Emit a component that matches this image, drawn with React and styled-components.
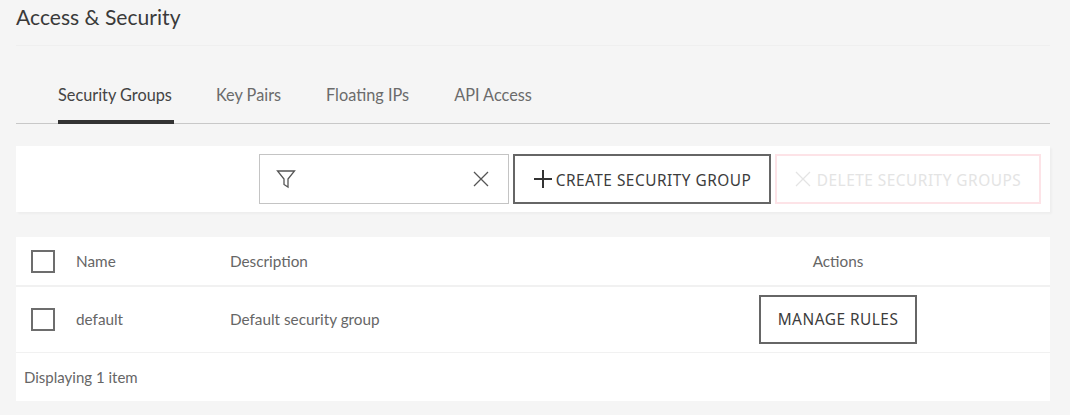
import styled, { createGlobalStyle } from "styled-components";

const GlobalStyle = createGlobalStyle`
  html, body {
    margin: 0;
    padding: 0;
    background: #f5f5f5;
    font-family: "Lato", "Open Sans", sans-serif;
  }
  * { box-sizing: border-box; }
`;

const Page = styled.div`
  width: 1070px;
  height: 415px;
  padding: 0 20px 0 16px;
  overflow: hidden;
`;

const Header = styled.div`
  height: 46px;
  padding-top: 3px;
  border-bottom: 1px solid #efefef;
`;

const Title = styled.h1`
  margin: 0;
  font-size: 21.1px;
  line-height: 28px;
  font-weight: 400;
  color: #3a3a3a;
`;

const Tabs = styled.div`
  display: flex;
  height: 78px;
  margin-bottom: 22px;
  padding: 0 42px;
  gap: 42px;
  border-bottom: 1px solid #c8c8c8;
`;

const Tab = styled.div`
  height: 78px;
  padding: 38px ${(p) => (p.$active ? "2px" : "3px")} 0 0;
  font-size: 16.3px;
  line-height: 22px;
  color: ${(p) => (p.$active ? "#444" : "#6b6b6b")};
  border-bottom: 4px solid ${(p) => (p.$active ? "#333" : "transparent")};
`;

const Toolbar = styled.div`
  display: flex;
  justify-content: flex-end;
  height: 66px;
  padding: 8px 9px 8px 0;
  gap: 4px;
  background: #fff;
  box-shadow: 2px 2px 2px rgba(0, 0, 0, 0.03);
  margin-bottom: 25px;
`;

const FilterBox = styled.div`
  display: flex;
  align-items: center;
  justify-content: space-between;
  width: 250px;
  padding: 0 19px 0 16px;
  border: 1px solid #c4c4c4;
`;

const Button = styled.button`
  display: flex;
  align-items: center;
  justify-content: center;
  gap: ${(p) => p.$gap || "4px"};
  height: ${(p) => p.$height || "50px"};
  width: ${(p) => p.$width};
  padding: 0;
  background: #fff;
  border: 2px solid ${(p) => (p.$disabled ? "#fde3e7" : "#666")};
  color: ${(p) => (p.$disabled ? "#e4e4e4" : "#3c3c3c")};
  font-family: "Noto Sans", sans-serif;
  font-size: 15.4px;
  letter-spacing: 0.5px;
`;

const ToolbarLabel = styled.span`
  padding-top: 2px;
`;

const Table = styled.div`
  background: #fff;
`;

const Row = styled.div`
  display: grid;
  grid-template-columns: 60px 154px 1fr 212px 106px;
  align-items: center;
  height: ${(p) => p.$height};
  border-bottom: ${(p) => p.$line} solid #f1f1f1;
  font-size: 15.3px;
  color: #666;
`;

const Cell = styled.div`
  padding-bottom: ${(p) => p.$lift || "0"};
`;

const CheckBox = styled.span`
  display: block;
  width: 24px;
  height: 23px;
  margin-left: 15px;
  border: 2px solid #6d6d6d;
`;

const Actions = styled.div`
  display: flex;
  justify-content: center;
`;

const Footer = styled.div`
  height: 48px;
  padding: 0 8px;
  display: flex;
  align-items: center;
  font-size: 15px;
  color: #666;
`;

const FilterIcon = () => (
  <svg width="20" height="20" viewBox="0 0 20 20" fill="none" stroke="#555" strokeWidth="1.3">
    <path d="M1.5 2h17l-6.5 8v8l-4-2.5V10z" />
  </svg>
);

const CloseIcon = ({ size = 16, color = "#555" }) => (
  <svg width={size} height={size} viewBox="0 0 16 16" fill="none" stroke={color} strokeWidth="1.3">
    <path d="M1 1l14 14M15 1L1 15" />
  </svg>
);

const PlusIcon = () => (
  <svg width="20" height="20" viewBox="0 0 20 20" fill="none" stroke="#333" strokeWidth="2">
    <path d="M10 1v18M1 10h18" />
  </svg>
);

const App = () => (
  <>
    <GlobalStyle />
    <Page>
      <Header>
        <Title>Access &amp; Security</Title>
      </Header>
      <Tabs>
        <Tab $active>Security Groups</Tab>
        <Tab>Key Pairs</Tab>
        <Tab>Floating IPs</Tab>
        <Tab>API Access</Tab>
      </Tabs>
      <Toolbar>
        <FilterBox>
          <FilterIcon />
          <CloseIcon />
        </FilterBox>
        <Button $width="258px" $gap="3px">
          <PlusIcon />
          <ToolbarLabel>CREATE SECURITY GROUP</ToolbarLabel>
        </Button>
        <Button $width="266px" $gap="6px" $disabled>
          <CloseIcon color="#e4e4e4" />
          <ToolbarLabel>DELETE SECURITY GROUPS</ToolbarLabel>
        </Button>
      </Toolbar>
      <Table>
        <Row $height="50px" $line="2px">
          <CheckBox />
          <Cell>Name</Cell>
          <Cell>Description</Cell>
          <Actions>Actions</Actions>
        </Row>
        <Row $height="66px" $line="1px">
          <CheckBox />
          <Cell $lift="2px">default</Cell>
          <Cell $lift="2px">Default security group</Cell>
          <Actions>
            <Button $width="158px" $height="49px">MANAGE RULES</Button>
          </Actions>
        </Row>
        <Footer>Displaying 1 item</Footer>
      </Table>
    </Page>
  </>
);

export default App;
